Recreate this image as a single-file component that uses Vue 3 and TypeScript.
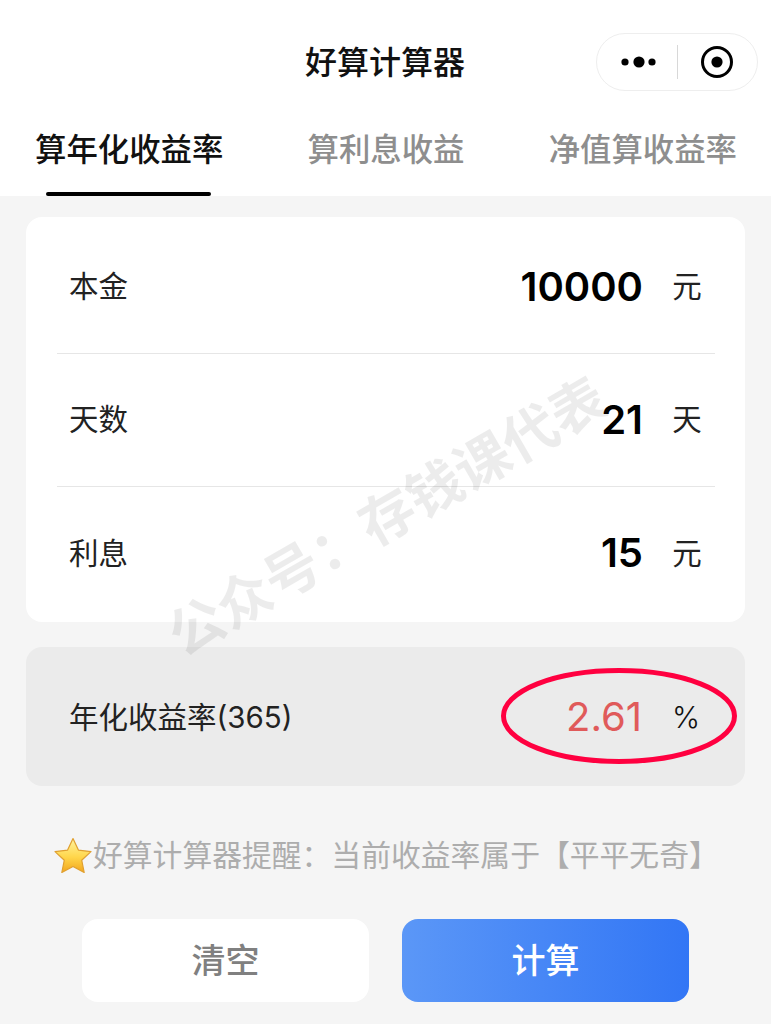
<script setup lang="ts">
interface Row { label: string; value: string; unit: string }
const rows: Row[] = [
  { label: '本金', value: '10000', unit: '元' },
  { label: '天数', value: '21', unit: '天' },
  { label: '利息', value: '15', unit: '元' },
]
const tabs: string[] = ['算年化收益率', '算利息收益', '净值算收益率']
</script>

<template>
  <div class="page">
    <header class="head">
      <div class="nav">
        <div class="title">好算计算器</div>
        <div class="capsule">
          <svg class="dots" width="36" height="14" viewBox="0 0 36 14">
            <circle cx="4" cy="7" r="3.6" fill="#000" />
            <circle cx="18" cy="7" r="5.6" fill="#000" />
            <circle cx="31" cy="7" r="3.6" fill="#000" />
          </svg>
          <span class="sep"></span>
          <svg class="target" width="34" height="34" viewBox="0 0 34 34">
            <circle cx="17" cy="17" r="14.5" fill="none" stroke="#000" stroke-width="3" />
            <circle cx="17" cy="17" r="5.600" fill="#000" />
          </svg>
        </div>
      </div>
      <div class="tabs">
        <div v-for="(t, i) in tabs" :key="t" class="tab" :class="{ on: i === 0 }">{{ t }}</div>
      </div>
    </header>

    <main class="body">
      <section class="card">
        <div v-for="r in rows" :key="r.label" class="row">
          <span class="label">{{ r.label }}</span>
          <span class="value">{{ r.value }}</span>
          <span class="unit">{{ r.unit }}</span>
        </div>
      </section>

      <section class="result">
        <span class="label res-label">年化收益率<span class="latin">(365)</span></span>
        <span class="rate">2.61</span>
        <span class="unit pct">%</span>
        <svg class="ring" width="240" height="100" viewBox="0 0 240 100">
          <ellipse cx="120" cy="50" rx="115.5" ry="45.5" fill="none" stroke="#ff0040" stroke-width="5" />
        </svg>
      </section>

      <p class="tip">
        <svg class="star" width="40" height="36" viewBox="0 0 40 36">
          <defs>
            <linearGradient id="starFill" x1="0" y1="0" x2="0" y2="1">
              <stop offset="0" stop-color="#fff3a0" />
              <stop offset="0.55" stop-color="#ffd64a" />
              <stop offset="1" stop-color="#f2a51e" />
            </linearGradient>
          </defs>
          <path d="M20 1.5l5.4 11.6 12.6 1.5-9.3 8.6 2.5 12.3L20 29.5 8.8 35.5l2.5-12.3L2 14.600l12.600-1.500z" fill="url(#starFill)" stroke="#e0a030" stroke-width="1.200" stroke-linejoin="round" />
        </svg>
        <span class="tip-text">好算计算器提醒：当前收益率属于【平平无奇】</span>
      </p>

      <div class="btns">
        <button class="btn clear">清空</button>
        <button class="btn calc">计算</button>
      </div>
    </main>

    <div class="mark">公众号：存钱课代表</div>
  </div>
</template>

<style>
html, body { margin: 0; padding: 0; background: #f5f5f5; }
</style>

<style scoped>
.page {
  position: relative;
  width: 771px;
  height: 1024px;
  overflow: hidden;
  background: #f5f5f5;
  font-family: "Noto Sans CJK SC", "Liberation Sans", sans-serif;
  color: #111;
}
.head { background: #fff; height: 196px; }
.nav {
  position: relative;
  height: 125px;
  display: flex;
  align-items: center;
  justify-content: center;
}
.title { font-size: 32px; font-weight: 500; line-height: 44px; margin: 0 0 6px -1px; color: #111; }
.capsule {
  position: absolute;
  left: 596px;
  top: 33px;
  width: 162px;
  height: 58px;
  box-sizing: border-box;
  border: 1px solid #eeeeee;
  border-radius: 30px;
  background: #fff;
  display: flex;
  align-items: center;
}
.dots { margin-left: 24px; }
.sep { width: 1px; height: 34px; background: #d8d8d8; margin-left: 20px; }
.target { margin-left: 22px; }
.tabs { display: flex; justify-content: space-between; padding: 0 34px 0 35px; margin-top: -2px; }
.tab {
  position: relative;
  font-size: 31.4px;
  line-height: 50px;
  height: 73px;
  color: #8e8e8e;
  font-weight: 500;
  white-space: nowrap;
}
.tab.on { color: #111; }
.tab.on::after {
  content: "";
  position: absolute;
  left: 11px;
  right: 12px;
  bottom: 0;
  height: 4px;
  border-radius: 2px;
  background: #000;
}
.body { padding: 21px 26px 0; }
.card { background: #fff; border-radius: 16px; padding: 4px 30px 2px 31px; height: 405px; box-sizing: border-box; }
.row {
  display: flex;
  align-items: center;
  height: 133px;
  box-sizing: border-box;
  padding: 0 13px 0 12px;
  border-bottom: 1px solid #e6e6e6;
}
.row:last-child { border-bottom: 0; }
.label { font-size: 29.500px; color: #222; flex: 1; white-space: nowrap; padding-bottom: 6px; }
.value { font-family: Inter, "Liberation Sans", sans-serif; font-size: 40px; font-weight: 600; color: #000; padding-bottom: 2px; }
.unit { font-size: 29.500px; color: #222; margin-left: 29px; width: 30px; text-align: center; padding-bottom: 6px; }
.result {
  position: relative;
  display: flex;
  align-items: center;
  margin-top: 25px;
  height: 139px;
  padding: 0 44px 0 43px;
  background: #ebebeb;
  border-radius: 16px;
}
.res-label { padding-bottom: 4px; }
.latin { font-family: Inter, "Liberation Sans", sans-serif; font-weight: 400; }
.rate { font-family: Inter, "Liberation Sans", sans-serif; font-size: 40px; font-weight: 400; color: #e05a5a; margin-left: 1px; }
.pct { font-family: Inter, "Liberation Sans", sans-serif; font-size: 30px; font-weight: 300; color: #111; padding-bottom: 0; }
.ring { position: absolute; left: 473px; top: 19px; }
.tip {
  display: flex;
  align-items: center;
  margin: 50px 0 0 27px;
  height: 38px;
  font-size: 29.800px;
  color: #adadad;
  white-space: nowrap;
}
.tip-text { padding-bottom: 5px; }
.star { flex: none; margin-right: 0; }
.btns { display: flex; gap: 33px; margin: 45px 0 0 56px; }
.btn {
  width: 287px;
  height: 83px;
  border: 0;
  border-radius: 16px;
  padding: 0 0 4px;
  font-family: inherit;
  font-size: 34px;
  font-weight: 500;
}
.clear { background: #fff; color: #808080; }
.calc { background: linear-gradient(90deg, #5b97f7, #3276f5); color: #fff; }
.mark {
  position: absolute;
  left: 85px;
  top: 478px;
  width: 600px;
  text-align: center;
  font-size: 55px;
  line-height: 70px;
  font-weight: 700;
  color: rgba(0, 0, 0, 0.075);
  white-space: nowrap;
  transform: rotate(-30deg);
  pointer-events: none;
}
</style>
